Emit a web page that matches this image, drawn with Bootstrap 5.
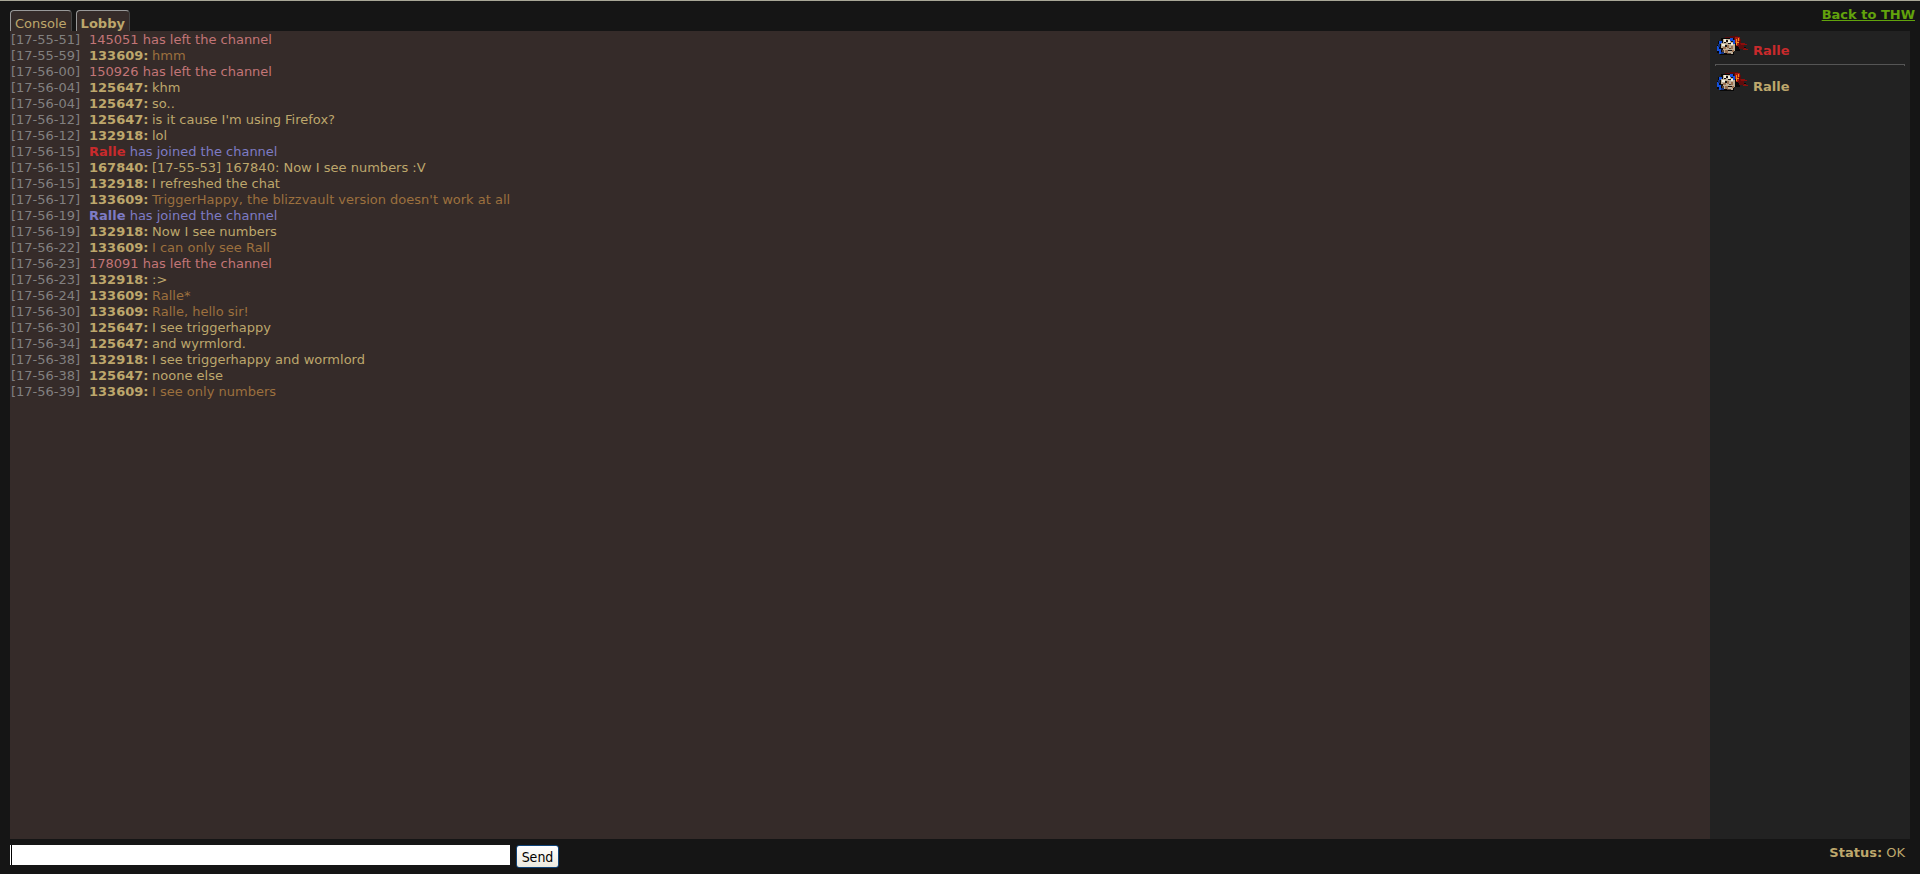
<!DOCTYPE html>
<html lang="en">
<head>
<meta charset="utf-8">
<meta name="viewport" content="width=device-width, initial-scale=1">
<title>Chat - Lobby</title>
<link rel="stylesheet" href="https://cdn.jsdelivr.net/npm/bootstrap@5.3.0/dist/css/bootstrap.min.css">
<style>
body { background: #151515; color: #bda76c; font: 13px/16px "DejaVu Sans", Verdana, sans-serif; border-top: 1px solid #a9a797; }
.topbar { height: 30px; padding: 0 5px 0 10px; }
.tab { background: #352b29; color: #bda76c; border: 1px solid #999; border-right-color: #444; border-bottom: 0; border-radius: 4px 4px 0 0; padding: 5px 4px 0; height: 21px; line-height: 16px; }
.tab.active { font-weight: bold; }
.back { color: #62a30c; font-weight: bold; padding-top: 6px; }
.chat { margin: 0 10px; }
.log { background: #352b29; padding: 1px; }
.line { white-space: nowrap; }
.time { color: #828080; width: 78px; flex: none; }
.nick { font-weight: bold; width: 63px; flex: none; }
.left { color: #c27577; }
.joined { color: #7d7bc4; }
.mod { color: #9c703e; }
.op { color: #c92a2c; }
.users { background: #222; width: 200px; flex: none; padding: 5px; }
.user { height: 23px; font-weight: bold; padding-left: 1px; gap: 5px; }
.user span { padding-top: 7px; }
.user svg { width: 32px; height: 20px; }
.divider { margin: 5px 0 6px; height: 2px; border: 1px solid #555; border-bottom-width: 0; opacity: 1; }
.bottom { height: 35px; padding: 6px 15px 0 10px; gap: 6px; }
.entry { width: 500px; height: 20px; border: 0; padding: 0 3px; background: #fff; outline: 0; }
.caret { border-left: 1px solid #fff; box-shadow: inset 1px 0 #000; }
.send { height: 23px; width: 43px; padding: 0; font: 14px/18px "DejaVu Sans Condensed", "Liberation Sans", sans-serif; color: #000; background: linear-gradient(#fff, #eceae0); border: 1px solid #104478; border-radius: 3px; }
</style>
</head>
<body class="d-flex flex-column vh-100 m-0">
<svg width="0" height="0" class="position-absolute" aria-hidden="true">
  <symbol id="face" viewBox="0 0 32 20">
    <path fill="#570b0b" d="M9 1h5v2H9zM14 0h8v3h3v7h-5V4h-6z"/>
    <path fill="#080808" d="M2 5h3V2h13v3h4v6h8v2h-6v2h-6v4H4v-2H1V9h1z"/>
    <path fill="#1450dc" d="M3 5h3v3H4v3H3v4H1v-5h2zM3 13h2v3h2v2H3zM14 2h3v3h-3zM17 4h2v4h-2z"/>
    <path fill="#123078" d="M2 8h2v3H2zM5 16h3v2H5z"/>
    <path fill="#bcae98" d="M7 3h7v2h3v3h2v7h-2v3h-6v-1H8v-3H5V7h2z"/>
    <path fill="#f1eddc" d="M8 3h2v3H8zM12 4h2v3h-2zM15 7h2v2h-2zM6 8h3v2H6z"/>
    <path fill="#15100f" d="M10 4h2v2h-2zM8 6h2v1H8zM12 7h3v1h-3zM9 9h2v2H9zM15 5h2v1h-2zM5 12h2v2H5zM12 14h4v1h-4z"/>
    <path fill="#987051" d="M7 11h3v2H7zM11 9h2v3h-2zM9 14h3v3H9zM15 10h2v3h-2zM16 14h2v2h-2z"/>
    <path fill="#604233" d="M6 14h2v2H6zM13 12h2v1h-2zM11 17h4v1h-4z"/>
    <path fill="#a31510" d="M19 1h5v4h-1v5h-3V7h-1z"/>
    <path fill="#8a0d0b" d="M24 7h5v1h2v1h-6zM25 12h5v1h2v1h-5v-1h-2z"/>
    <path fill="#ed8a20" d="M20 3h1v3h2v1h-2v2h-1zM22 2h1v3h-1z"/>
    <path fill="#5e0c0c" d="M22 9h6v2h-6zM23 11h5v2h-5z"/>
  </symbol>
</svg>
<header class="topbar d-flex justify-content-between">
  <nav class="d-flex align-items-end gap-1" aria-label="Channels">
    <button type="button" class="tab">Console</button>
    <button type="button" class="tab active">Lobby</button>
  </nav>
  <a class="back" href="#">Back to THW</a>
</header>
<div class="chat d-flex flex-grow-1">
  <main class="log flex-grow-1">
    <div class="line d-flex"><span class="time">[17-55-51]</span><span class="left">145051 has left the channel</span></div>
    <div class="line d-flex"><span class="time">[17-55-59]</span><span class="nick">133609:</span><span class="mod">hmm</span></div>
    <div class="line d-flex"><span class="time">[17-56-00]</span><span class="left">150926 has left the channel</span></div>
    <div class="line d-flex"><span class="time">[17-56-04]</span><span class="nick">125647:</span><span>khm</span></div>
    <div class="line d-flex"><span class="time">[17-56-04]</span><span class="nick">125647:</span><span>so..</span></div>
    <div class="line d-flex"><span class="time">[17-56-12]</span><span class="nick">125647:</span><span>is it cause I'm using Firefox?</span></div>
    <div class="line d-flex"><span class="time">[17-56-12]</span><span class="nick">132918:</span><span>lol</span></div>
    <div class="line d-flex"><span class="time">[17-56-15]</span><span class="joined"><b class="op">Ralle</b> has joined the channel</span></div>
    <div class="line d-flex"><span class="time">[17-56-15]</span><span class="nick">167840:</span><span>[17-55-53] 167840: Now I see numbers :V</span></div>
    <div class="line d-flex"><span class="time">[17-56-15]</span><span class="nick">132918:</span><span>I refreshed the chat</span></div>
    <div class="line d-flex"><span class="time">[17-56-17]</span><span class="nick">133609:</span><span class="mod">TriggerHappy, the blizzvault version doesn't work at all</span></div>
    <div class="line d-flex"><span class="time">[17-56-19]</span><span class="joined"><b>Ralle</b> has joined the channel</span></div>
    <div class="line d-flex"><span class="time">[17-56-19]</span><span class="nick">132918:</span><span>Now I see numbers</span></div>
    <div class="line d-flex"><span class="time">[17-56-22]</span><span class="nick">133609:</span><span class="mod">I can only see Rall</span></div>
    <div class="line d-flex"><span class="time">[17-56-23]</span><span class="left">178091 has left the channel</span></div>
    <div class="line d-flex"><span class="time">[17-56-23]</span><span class="nick">132918:</span><span>:&gt;</span></div>
    <div class="line d-flex"><span class="time">[17-56-24]</span><span class="nick">133609:</span><span class="mod">Ralle*</span></div>
    <div class="line d-flex"><span class="time">[17-56-30]</span><span class="nick">133609:</span><span class="mod">Ralle, hello sir!</span></div>
    <div class="line d-flex"><span class="time">[17-56-30]</span><span class="nick">125647:</span><span>I see triggerhappy</span></div>
    <div class="line d-flex"><span class="time">[17-56-34]</span><span class="nick">125647:</span><span>and wyrmlord.</span></div>
    <div class="line d-flex"><span class="time">[17-56-38]</span><span class="nick">132918:</span><span>I see triggerhappy and wormlord</span></div>
    <div class="line d-flex"><span class="time">[17-56-38]</span><span class="nick">125647:</span><span>noone else</span></div>
    <div class="line d-flex"><span class="time">[17-56-39]</span><span class="nick">133609:</span><span class="mod">I see only numbers</span></div>
  </main>
  <aside class="users">
    <div class="user d-flex"><svg aria-hidden="true"><use href="#face"/></svg><span class="op">Ralle</span></div>
    <hr class="divider">
    <div class="user d-flex"><svg aria-hidden="true"><use href="#face"/></svg><span>Ralle</span></div>
  </aside>
</div>
<form class="bottom d-flex align-items-start">
  <input type="text" class="entry caret" aria-label="Message">
  <button type="button" class="send">Send</button>
  <div class="ms-auto"><b>Status:</b> OK</div>
</form>
<script src="https://cdn.jsdelivr.net/npm/bootstrap@5.3.0/dist/js/bootstrap.bundle.min.js"></script>
</body>
</html>
